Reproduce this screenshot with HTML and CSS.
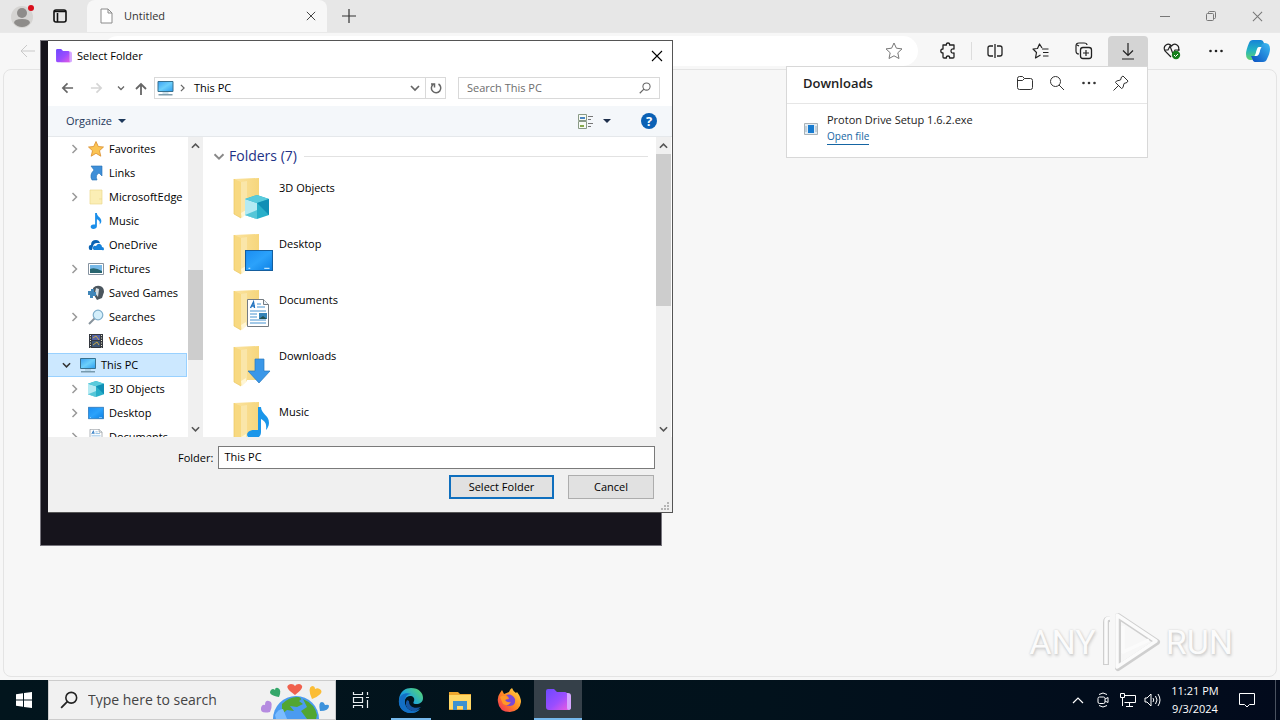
FILE: index.html
```html
<!DOCTYPE html>
<html lang="en">
<head>
<meta charset="utf-8">
<title>Select Folder</title>
<link rel="stylesheet" href="styles.css">
</head>
<body>
<svg class="defs" aria-hidden="true">
  <defs>
    <linearGradient id="g-folder" x1="0" x2="1"><stop offset="0" stop-color="#fbe3a0"/><stop offset="1" stop-color="#f6d67c"/></linearGradient>
    <linearGradient id="g-screen" x1="0" y1="0" x2="1" y2="1"><stop offset="0" stop-color="#3aa0f3"/><stop offset=".5" stop-color="#6cd0fb"/><stop offset="1" stop-color="#2c9cf0"/></linearGradient>
    <linearGradient id="g-desk" x1="0" y1="0" x2="1" y2="1"><stop offset="0" stop-color="#1a8df2"/><stop offset=".5" stop-color="#2ba2fb"/><stop offset="1" stop-color="#0c80e4"/></linearGradient>
    <linearGradient id="g-proton" x1="0" y1="0" x2="1" y2="1"><stop offset="0" stop-color="#6d49ff"/><stop offset=".55" stop-color="#9a4dff"/><stop offset="1" stop-color="#ec5be0"/></linearGradient>
    <linearGradient id="g-edge" x1="0" y1="1" x2="1" y2="0"><stop offset="0" stop-color="#0b62bd"/><stop offset=".5" stop-color="#1da5dd"/><stop offset="1" stop-color="#5fdc63"/></linearGradient>
    <linearGradient id="g-fox" x1="1" y1="0" x2="0" y2="1"><stop offset="0" stop-color="#ffe14a"/><stop offset=".5" stop-color="#ff8b22"/><stop offset="1" stop-color="#f0255e"/></linearGradient>
    <linearGradient id="g-cop1" x1="0" y1="0" x2="0" y2="1"><stop offset="0" stop-color="#1583d8"/><stop offset=".5" stop-color="#23b3c3"/><stop offset="1" stop-color="#64d36a"/></linearGradient>
    <linearGradient id="g-cop2" x1="1" y1="0" x2="0" y2="1"><stop offset="0" stop-color="#3bbcf3"/><stop offset="1" stop-color="#0a4ec0"/></linearGradient>
    <symbol id="i-chev" viewBox="0 0 8 10"><path d="M2 1l4 4-4 4" fill="none" stroke="currentColor" stroke-width="1.5"/></symbol>
    <symbol id="i-down" viewBox="0 0 10 8"><path d="M1 2l4 4 4-4" fill="none" stroke="currentColor" stroke-width="1.7"/></symbol>
    <symbol id="i-up" viewBox="0 0 10 8"><path d="M1 6l4-4 4 4" fill="none" stroke="currentColor" stroke-width="1.8"/></symbol>
    <symbol id="i-x" viewBox="0 0 12 12"><path d="M1 1l10 10M11 1L1 11" fill="none" stroke="currentColor" stroke-width="1.1"/></symbol>
    <symbol id="i-arrow" viewBox="0 0 14 12"><path d="M13 6H2M7 1L2 6l5 5" fill="none" stroke="currentColor" stroke-width="1.8"/></symbol>
    <symbol id="i-dots" viewBox="0 0 16 4"><g fill="currentColor"><circle cx="2.5" cy="2" r="1.3"/><circle cx="8" cy="2" r="1.3"/><circle cx="13.500" cy="2" r="1.300"/></g></symbol>
    <symbol id="i-mag" viewBox="0 0 16 16"><circle cx="6.500" cy="6.500" r="5" fill="none" stroke="currentColor"/><path d="M10 10l5 5" stroke="currentColor"/></symbol>
    <symbol id="i-magleft" viewBox="0 0 16 16"><circle cx="10" cy="6" r="4.800" fill="none" stroke="currentColor" stroke-width="1.400"/><path d="M6.500 9.500L1 15" stroke="currentColor" stroke-width="1.600"/></symbol>
    <symbol id="i-pc" viewBox="0 0 16 16"><path d="M.5 1.500h15v10H.5z" fill="url(#g-screen)" stroke="#39718f"/><path d="M5 13h6" stroke="#9ec3d4"/><path d="M1 14.800h14" stroke="#61869a" stroke-width="1.200"/></symbol>
    <symbol id="i-desk" viewBox="0 0 16 12"><path d="M.3.3h15.400v11.400H.3z" fill="url(#g-desk)" stroke="#155e9e" stroke-width=".6"/><path d="M2 10.500h1M11 10.500h3" stroke="#b9e3ff" stroke-width=".6"/></symbol>
    <symbol id="i-cube" viewBox="0 0 24 24"><path d="M0 4L12 0l12 4v16l-12 4L0 20z" fill="#28afc9"/><path d="M0 4l12 4v16L0 20z" fill="#b4eaf3"/><path d="M0 4L12 0l12 4-12 4z" fill="#59cbdc"/><path d="M12 8l12-4v16z" fill="#108fb5"/><path d="M0 20l12-5v9z" fill="#55c6d8"/></symbol>
    <symbol id="i-note" viewBox="0 0 12 18"><path d="M5 0h2c0 4 5 5 5 9 0 2-1 3-2 4 1-4-1-5-3-6v8c0 2-2 3-4 3-4 0-4-5 0-5h2z" fill="#1a8eea"/></symbol>
    <symbol id="i-doc" viewBox="0 0 22 28"><path d="M.5.5h16l5 5v22H.5z" fill="#fff" stroke="#747b82"/><path d="M16.500.5v5h5" fill="#eef3f7" stroke="#747b82"/><path d="M3.500 9l3-6 1 6M4 7h4" stroke="#2474bf" stroke-width="1.400" fill="none"/><path d="M10 5h4M10 8h8M3 12h16M3 15h7M3 18h7M3 21h16M3 24h16" stroke="#4693d1" stroke-width="1"/><path d="M12 14h8v6h-8z" fill="#3584b8"/><path d="M12 20l4-3 4 3z" fill="#22504e"/></symbol>
    <symbol id="i-folder" viewBox="0 0 28 42"><path d="M1 2l25-1v34H8L1 37z" fill="url(#g-folder)"/><path d="M1 2l7 3v36L1 37z" fill="#f8d981"/><path d="M8 5l6-1v32l-6 5z" fill="#fae6a9"/><path d="M8 36l5-3v4l-4 4z" fill="#fff6d5"/><path d="M1 2v35l7 4" fill="none" stroke="#ecc75f" stroke-width=".7"/></symbol>
    <symbol id="i-proton" viewBox="0 0 25 22"><path d="M8 4h14q3 0 3 3v12q0 2-3 2H8z" fill="#d5a5ff"/><path d="M0 2q0-2 2-2h6l3 3h8q2 0 2 2v14q0 2 2 2H3q-3 0-3-3z" fill="url(#g-proton)"/></symbol>
  </defs>
</svg>

<div class="desktop">
  <main class="browser">
    <header class="tabs">
      <button class="bare profile" aria-label="Profile"><svg width="24" height="24" viewBox="0 0 24 24"><circle cx="11" cy="13" r="11" fill="#d5d4d2"/><circle cx="11" cy="9" r="5" fill="#8e8c8a"/><path d="M3 19q0-4 8-4t8 4q-3 4-8 4t-8-4z" fill="#8e8c8a"/><circle cx="20" cy="4" r="3" fill="#d90f1c"/></svg></button>
      <button class="bare tabmenu" aria-label="Tab actions"><svg width="14" height="14" viewBox="0 0 14 14"><rect x="1" y="1" width="12" height="12" rx="2" fill="none" stroke="#111" stroke-width="1.600"/><path d="M1 2.500h12M4.500 4v9" stroke="#111" stroke-width="1.600"/></svg></button>
      <div class="tab">
        <svg width="13" height="16" viewBox="0 0 13 16"><path d="M1 1h7l4 4v10H1zM8 1v4h4" fill="#fff" stroke="#8b8b8b"/></svg>
        <span class="tab-name">Untitled</span>
        <button class="bare" aria-label="Close tab"><svg class="s9"><use href="#i-x"/></svg></button>
      </div>
      <button class="bare newtab" aria-label="New tab"><svg width="14" height="14" viewBox="0 0 14 14"><path d="M7 0v14M0 7h14" stroke="#333" stroke-width="1.200"/></svg></button>
      <div class="wincontrols">
        <button class="bare" aria-label="Minimize"><svg width="10" height="10"><path d="M0 5.500h10" stroke="#777"/></svg></button>
        <button class="bare" aria-label="Restore"><svg width="10" height="10" viewBox="0 0 10 10" fill="none" stroke="#777"><rect x=".5" y="2.500" width="7" height="7" rx="1"/><path d="M2.500 2V1.500q0-1 1-1h5q1 0 1 1v5q0 1-1 1H8"/></svg></button>
        <button class="bare" aria-label="Close"><svg class="s11"><use href="#i-x"/></svg></button>
      </div>
    </header>
    <div class="toolbar">
      <button class="bare back" aria-label="Back"><svg width="16" height="14" viewBox="0 0 16 14"><path d="M15 7H1M7 1L1 7l6 6" fill="none" stroke="#c9c9c9"/></svg></button>
      <div class="omnibox"><button class="bare" aria-label="Favorite"><svg width="18" height="18" viewBox="0 0 18 18"><path d="M9 1l2.400 5.200 5.600.7-4.200 3.900 1.200 5.700L9 13.800l-5 2.700 1.200-5.700L1 6.900l5.600-.7z" fill="none" stroke="#777" stroke-linejoin="round"/></svg></button></div>
      <div class="tools">
        <button class="bare" aria-label="Extensions"><svg width="16" height="18" viewBox="0 0 16 18"><path d="M3 3h3.500q-.5-2 1.500-2t1.500 2H14v4q-3-.5-3 2t3 2v4q0 1-1 1H9.500q.5-2-1.500-2t-1.500 2H4q-1 0-1-1v-4Q.8 11 .8 9T3 7z" fill="none" stroke="#222" stroke-width="1.300" stroke-linejoin="round"/></svg></button>
        <button class="bare split" aria-label="Split screen"><svg width="16" height="14" viewBox="0 0 16 14"><path d="M6 2H3Q1 2 1 4v6q0 2 2 2h3M10 2h3q2 0 2 2v6q0 2-2 2h-3M8 0v14" fill="none" stroke="#222" stroke-width="1.300"/></svg></button>
        <button class="bare" aria-label="Favorites"><svg width="17" height="16" viewBox="0 0 17 16"><path d="M10 5L7.500 1 5.500 5.500 1 6l3.500 3.500L3.500 15l5-3M10 6h6.500M11 9.500h5.500M11 13h5.500" fill="none" stroke="#222" stroke-width="1.200" stroke-linejoin="round"/></svg></button>
        <button class="bare" aria-label="Collections"><svg width="18" height="18" viewBox="0 0 18 18"><path d="M4 12Q1 12 1 9V4q0-3 3-3h5q3 0 3 2M4 4L2 3" fill="none" stroke="#222" stroke-width="1.200"/><rect x="5.500" y="5.500" width="11" height="11" rx="2.500" fill="#f7f7f7" stroke="#222" stroke-width="1.300"/><path d="M11 8v6M8 11h6" stroke="#222" stroke-width="1.200"/></svg></button>
        <button class="bare active" aria-label="Downloads"><svg width="14" height="17" viewBox="0 0 14 17"><path d="M7 0v12M2 7.500l5 5 5-5M1 16h12" fill="none" stroke="#222" stroke-width="1.200"/></svg></button>
        <button class="bare" aria-label="Browser essentials"><svg width="18" height="18" viewBox="0 0 18 18"><path d="M8 15L2 9q-2-4 1-6 3-2 5.500 1Q11 1 14 3q3 2 1 6M1 8h4l2-4 3 8 2-4h5" fill="none" stroke="#222" stroke-width="1.200"/><circle cx="13" cy="13" r="4.200" fill="#16801d"/><path d="M11 13l1.500 1.500L15 12" fill="none" stroke="#fff"/></svg></button>
        <button class="bare" aria-label="Settings and more"><svg width="16" height="4"><use href="#i-dots"/></svg></button>
        <button class="bare" aria-label="Copilot"><svg width="24" height="24" viewBox="0 0 24 24"><path d="M7 1h8q2 0 3 3l1 4h-5q-2 0-3 3l-2 7q-1 3-4 3-5 0-5-6 0-4 3-11 1-3 4-3z" fill="url(#g-cop1)"/><path d="M17 23H9q-2 0-3-4l-1-2h5q2 0 3-3l2-7q1-3 4-3 5 0 5 6 0 4-3 10-1 3-4 3z" fill="url(#g-cop2)"/><path d="M13 8h3q-1 0-1.500 2L13 15q-1 2-3 2H8q1 0 1.500-2L11 10q.5-2 2-2z" fill="#fff"/></svg></button>
      </div>
    </div>
    <section class="page" aria-label="Page"></section>

    <section class="downloads">
      <div class="dl-head">
        <h2>Downloads</h2>
        <button class="bare" aria-label="Open downloads folder"><svg width="16" height="14" viewBox="0 0 16 14" fill="none" stroke="#333"><path d="M.5 11.500v-9q0-2 2-2h3l2 2h6q2 0 2 2v7q0 2-2 2h-11q-2 0-2-2zM.5 4.500h5l2-2"/></svg></button>
        <button class="bare" aria-label="Search downloads"><svg width="16" height="16"><use href="#i-mag"/></svg></button>
        <button class="bare" aria-label="More options"><svg width="16" height="4"><use href="#i-dots"/></svg></button>
        <button class="bare" aria-label="Pin"><svg width="16" height="16" viewBox="0 0 16 16" fill="none" stroke="#333" stroke-linejoin="round"><path d="M10 1l5 5-1 1.500-3 1-1 4-1.500 1-6-6 1-1.500 4-1 1-3zM5 11l-4.500 4.500"/></svg></button>
      </div>
      <div class="dl-item">
        <svg width="14" height="12" viewBox="0 0 14 12"><path d="M.5.5h13v11H.5z" fill="#e4edf3" stroke="#a9b2b8"/><path d="M4 2h6v8H4z" fill="#187bd0"/><path d="M2 3v6M12 3v6" stroke="#9fb4c3"/></svg>
        <div><div class="dl-name">Proton Drive Setup 1.6.2.exe</div><a href="#">Open file</a></div>
      </div>
    </section>

    <div class="watermark"><span>ANY</span>
      <svg width="60" height="64" viewBox="0 0 60 64" fill="none" stroke-linejoin="round"><g stroke="#cfcfcf" stroke-width="6"><path d="M17 6l39 26-39 26z"/><path d="M5 55V12q0-3 4-3"/></g><g stroke="#fbfbfb" stroke-width="3.500"><path d="M16 5l39 26-39 26z"/><path d="M5 54V11q0-3 4-3M22 16v26l26-12"/></g></svg>
      <span>RUN</span></div>
  </main>

  <div class="backwindow"></div>
  <section class="dialog" role="dialog" aria-labelledby="dlg-title">
    <header class="titlebar">
      <svg width="16" height="14"><use href="#i-proton"/></svg>
      <h1 id="dlg-title">Select Folder</h1>
      <button class="bare" aria-label="Close dialog"><svg class="s12"><use href="#i-x"/></svg></button>
    </header>
    <div class="navrow">
      <div class="navbtns">
        <button class="bare" aria-label="Back"><svg width="13" height="12"><use href="#i-arrow"/></svg></button>
        <button class="bare off" aria-label="Forward"><svg class="flip" width="13" height="12"><use href="#i-arrow"/></svg></button>
        <button class="bare small" aria-label="Recent"><svg width="8" height="6"><use href="#i-down"/></svg></button>
        <button class="bare" aria-label="Up"><svg width="12" height="13" viewBox="0 0 12 13"><path d="M6 13V2M1 7l5-5 5 5" fill="none" stroke="#666" stroke-width="1.800"/></svg></button>
      </div>
      <div class="address">
        <svg width="17" height="16"><use href="#i-pc"/></svg>
        <svg class="crumb" width="7" height="8"><use href="#i-chev"/></svg>
        <span>This PC</span>
        <button class="bare" aria-label="Previous locations"><svg width="10" height="8"><use href="#i-down"/></svg></button>
        <button class="bare refresh" aria-label="Refresh"><svg width="12" height="12" viewBox="0 0 12 12"><path d="M8.500 2a4.700 4.700 0 1 1-5.300.3M1 2h3.500v3.500" fill="none" stroke="#666" stroke-width="1.500"/></svg></button>
      </div>
      <label class="find"><input type="text" placeholder="Search This PC" aria-label="Search This PC"><svg width="12" height="12"><use href="#i-magleft"/></svg></label>
    </div>
    <div class="commands">
      <button class="bare organize">Organize <svg width="8" height="4"><path d="M0 0h8L4 4z" fill="#1e395b"/></svg></button>
      <button class="bare view" aria-label="Change view"><svg width="16" height="15" viewBox="0 0 16 15"><path d="M.5.5h8v6h-8zM.5 7.500h8v7h-8z" fill="#f7fbf5" stroke="#8a9a86"/><path d="M2 3h5v2H2z" fill="#4b86c2"/><path d="M2 11h4v2H2z" fill="#87a94c"/><path d="M10 2.500h5M10 5.500h3M10 9.500h5M10 12.500h3" stroke="#777"/></svg><svg width="8" height="4"><path d="M0 0h8L4 4z" fill="#1e2f4b"/></svg></button>
      <button class="help" aria-label="Help">?</button>
    </div>
    <div class="panes">
      <nav class="tree">
        <ul>
          <li><svg class="exp"><use href="#i-chev"/></svg><svg class="ic" viewBox="0 0 16 16"><path d="M8 .5l2.300 5 5.200.5-4 3.700 1.300 5.500L8 12.300l-4.800 2.900 1.300-5.500L.5 6l5.200-.5z" fill="#fbc453" stroke="#d98d2c" stroke-width=".8"/></svg>Favorites</li>
          <li><i class="exp"></i><svg class="ic" viewBox="0 0 16 16"><path d="M3 1h11v10l-3-3q-4 2-2 7H4q-3-5 2-10z" fill="#3f8fd8" stroke="#2470b5" stroke-width=".6"/></svg>Links</li>
          <li><svg class="exp"><use href="#i-chev"/></svg><svg class="ic" viewBox="0 0 16 16"><path d="M2 1h12v14H2z" fill="#fbeeb5"/><path d="M2 1h12v14H2zM11 10h3" fill="none" stroke="#ecd88c" stroke-width=".7"/></svg>MicrosoftEdge</li>
          <li><i class="exp"></i><svg class="ic"><use href="#i-note"/></svg>Music</li>
          <li><i class="exp"></i><svg class="ic" viewBox="0 0 16 16"><path d="M1 12Q0 8 3 8q0-5 5-5 3 0 4 3H9Q6 6 5 9l-1 4H3q-2 0-2-1z" fill="#0a63b4"/><path d="M6 13q-2-1-1-3t3-1q2-3 4-2t2 3q2 0 2 2t-2 1z" fill="#1681d9"/></svg>OneDrive</li>
          <li><svg class="exp"><use href="#i-chev"/></svg><svg class="ic" viewBox="0 0 16 16"><path d="M.5 2.500h15v11H.5z" fill="#fff" stroke="#8693a0"/><path d="M2 4h12v8H2z" fill="#77b9e8"/><path d="M2 8q5-2 12 2v2H2z" fill="#28656f"/></svg>Pictures</li>
          <li><i class="exp"></i><svg class="ic" viewBox="0 0 16 16"><path d="M5 3q3-3 7-2 4 1 4 6l-2 6-5 2-3-5z" fill="#4b565e"/><path d="M8 3l3 1-1 8-3-4z" fill="#d7e0e5"/><path d="M0 6h3V4h3v3h2v4H5v2H2v-3H0z" fill="#4086b8"/></svg>Saved Games</li>
          <li><svg class="exp"><use href="#i-chev"/></svg><svg class="ic" viewBox="0 0 16 16"><path d="M7 9l-6 6" stroke="#87939c" stroke-width="2"/><circle cx="10" cy="6" r="4.800" fill="#d4effb" stroke="#7faecb" stroke-width="1.200"/></svg>Searches</li>
          <li><i class="exp"></i><svg class="ic" viewBox="0 0 16 16"><path d="M1 1h14v14H1z" fill="#34383f"/><path d="M4 2h8v5H4z" fill="#5262a6"/><path d="M4 8h8v6H4z" fill="#3e5675"/><path d="M5 5l3-2 3 4M5 12l4-3 2 3" stroke="#c9a947" fill="none"/><path d="M2.500 2v13M13.500 2v13" stroke="#e8ead5" stroke-dasharray="1 1.500"/></svg>Videos</li>
          <li class="root selected"><svg class="exp open"><use href="#i-down"/></svg><svg class="ic"><use href="#i-pc"/></svg>This PC</li>
          <li><svg class="exp"><use href="#i-chev"/></svg><svg class="ic"><use href="#i-cube"/></svg>3D Objects</li>
          <li><svg class="exp"><use href="#i-chev"/></svg><svg class="ic"><use href="#i-desk"/></svg>Desktop</li>
          <li><svg class="exp"><use href="#i-chev"/></svg><svg class="ic"><use href="#i-doc"/></svg>Documents</li>
        </ul>
      </nav>
      <div class="scroll tree-scroll"><svg class="sa"><use href="#i-up"/></svg><div class="track"><div class="thumb"></div></div><svg class="sa"><use href="#i-down"/></svg></div>
      <div class="files">
        <h2><svg width="12" height="9"><use href="#i-down"/></svg>Folders (7)</h2>
        <ul>
          <li><svg width="44" height="44"><use href="#i-folder" width="28" height="42"/><use href="#i-cube" x="12" y="18" width="24" height="24"/></svg>3D Objects</li>
          <li><svg width="44" height="44"><use href="#i-folder" width="28" height="42"/><use href="#i-desk" x="12" y="17" width="28" height="21"/></svg>Desktop</li>
          <li><svg width="44" height="44"><use href="#i-folder" width="28" height="42"/><use href="#i-doc" x="14" y="10" width="22" height="28"/></svg>Documents</li>
          <li><svg width="44" height="44"><use href="#i-folder" width="28" height="42"/><path d="M22 14h9v12h6L26 38 15 26h7z" fill="#3a97e8" stroke="#2878bd" stroke-width=".7"/></svg>Downloads</li>
          <li><svg width="44" height="44"><use href="#i-folder" width="28" height="42"/><path d="M25 6h3c0 7 8 8 8 16 0 3-2 6-3 7 1-8-2-9-5-11v13c0 5-4 7-8 7-8 0-8-9 1-9h4z" fill="#1a96ea"/></svg>Music</li>
        </ul>
      </div>
      <div class="scroll file-scroll"><svg class="sa"><use href="#i-up"/></svg><div class="track"><div class="thumb"></div></div><svg class="sa"><use href="#i-down"/></svg></div>
    </div>
    <footer class="dlg-foot">
      <div class="field"><label for="folder">Folder:</label><input id="folder" type="text" value="This PC"></div>
      <div class="actions"><button class="btn primary">Select Folder</button><button class="btn">Cancel</button></div>
      <svg class="grip" width="9" height="9" fill="#b5b5b5"><path d="M6 0h2v2H6zM3 3h2v2H3zM6 3h2v2H6zM0 6h2v2H0zM3 6h2v2H3zM6 6h2v2H6z"/></svg>
    </footer>
  </section>
</div>

<footer class="taskbar">
  <button class="bare start" aria-label="Start"><svg width="16" height="16" viewBox="0 0 16 16" fill="#fff"><path d="M0 2.200L7 1.200V7.500H0zM8 1l8-1v7.500H8zM0 8.500h7v6.300l-7-1zM8 8.500h8V16l-8-1z"/></svg></button>
  <label class="tasksearch"><svg width="18" height="18"><use href="#i-magleft"/></svg><input type="text" placeholder="Type here to search" aria-label="Type here to search">
    <svg width="72" height="38" viewBox="0 0 72 38"><circle cx="37" cy="38" r="23" fill="#4b9bf0"/><path d="M23 23q8-8 17-7 4 2 0 4l4 3-6 3-7-1 4 5-7-1-5 4zM44 18q12 5 14 16l-1 4h-9l-6-8 6-4z" fill="#52a632"/><path d="M16 34q3-6 8-6l4 10H17z" fill="#7bbcff"/><path d="M36 14q-13-9-4-11 3 0 4 2 1-2 4-2 8 2-4 11z" fill="#f0604d"/><path d="M20 16q-12-2-8-7 2-2 4 0 0-3 3-2 4 2 1 9z" fill="#35a76a"/><path d="M53 18q-5-11 0-13 3 0 3 3 3-2 6 1 3 4-9 9z" fill="#fbbd35"/><path d="M11 31q-10 2-9-4 1-4 4-3 0-5 4-4 5 1 1 11z" fill="#b58be0"/><path d="M61 30q-2-9 2-9 2 0 3 3 4-1 4 1 0 5-9 5z" fill="#3c92dc"/></svg></label>
  <div class="apps">
    <button class="bare" aria-label="Task view"><svg width="18" height="16" viewBox="0 0 18 16" fill="none" stroke="#e8edef"><path d="M1.500 0v2.500h9V0M1.500 16v-2.500h9V16M1.500 5.500h9v5h-9zM15.500 0v3M15.500 8v8M14 5.500h3" stroke-width="1.200"/></svg></button>
    <button class="bare running" aria-label="Microsoft Edge"><svg width="26" height="26" viewBox="0 0 26 26"><path d="M1 12C2 4 8 1 13 1c8 0 12 5 12 10 0 4-3 6-7 6-3 0-3-1-2-3 1-3-1-5-4-5-4 0-6 4-5 8 1 5 6 8 11 7l4-2c-3 3-6 4-9 4C4 26 0 19 1 12z" fill="url(#g-edge)"/><path d="M1 13c1-6 7-8 12-6-5 0-7 5-6 10 1 5 7 8 11 7l4-2c-3 3-6 4-9 4C5 26 0 20 1 13z" fill="#136fc5"/><path d="M9 13c-4 7 3 12 9 11l5-4c-7 2-12 0-12-6z" fill="#1656a4"/></svg></button>
    <button class="bare" aria-label="File Explorer"><svg width="22" height="19" viewBox="0 0 22 19"><path d="M0 1h9l2 2h11v16H0z" fill="#eea72e"/><path d="M0 4h22v14H0z" fill="#ffd867"/><path d="M4 10h14v9h-4v-4H8v4H4z" fill="#3d91cf"/></svg></button>
    <button class="bare" aria-label="Firefox"><svg width="24" height="24" viewBox="0 0 24 24"><path d="M3 5l2-3 2 4 5-2q1-3 3-4 1 3 4 5l1-1q4 5 4 10-1 9-11 10Q2 24 1 14 0 9 3 5z" fill="url(#g-fox)"/><path d="M9 7q6-2 9 4 1 7-5 7-6 0-6-6l5-1q0-2-3-4z" fill="#7948d8"/><path d="M3 9q4-3 8 1l-3 2q2 3 6 2-3 5-8 2z" fill="#ff9828"/></svg></button>
    <button class="bare current" aria-label="Proton Drive"><svg width="25" height="22"><use href="#i-proton"/></svg></button>
  </div>
  <div class="tray">
    <svg class="caret" width="12" height="7" viewBox="0 0 12 7"><path d="M1 6l5-5 5 5" fill="none" stroke="#fff" stroke-width="1.200"/></svg>
    <svg class="meet" width="12" height="16" viewBox="0 0 12 16" fill="none" stroke="#fff"><rect x="1" y="5" width="7" height="6.500" rx="1.500"/><path d="M8 7l3-1.500v5L8 9M2 2.500q4-3 8 0M2 13.500q4 3 8 0"/></svg>
    <svg width="16" height="14" viewBox="0 0 16 14" fill="none" stroke="#fff"><path d="M5 2.500h10.500v7H4.500M.5.5h4v4h-4zM2.500 4.500V13M9.500 10v3M6 13.500h7"/></svg>
    <svg width="17" height="14" viewBox="0 0 17 14" fill="none" stroke="#fff"><path d="M1 5h2l4-4v12L3 9H1zM9 5q1.500 2 0 4M11.500 3q3 4 0 8M14 1q4 6 0 12"/></svg>
    <div class="clock"><time>11:21 PM</time><time>9/3/2024</time></div>
    <svg width="16" height="16" viewBox="0 0 16 16" fill="none" stroke="#fff"><path d="M.5 1.500h15v11h-5L8 15l-2.500-2.500h-5z"/></svg>
    <button class="bare showdesk" aria-label="Show desktop"></button>
  </div>
</footer>
</body>
</html>
```
FILE: styles.css
```css
* { box-sizing: border-box; }
body { margin: 0; min-height: 100vh; display: flex; flex-direction: column; font: 11px/16px "Open Sans", "Noto Sans", sans-serif; color: #000; background: #e7e7e7; }
h1, h2, ul { margin: 0; padding: 0; list-style: none; font-weight: 400; }
input, button { font: inherit; color: inherit; }
svg { flex: none; display: block; }
.defs { position: absolute; width: 0; height: 0; }
.bare { border: 0; padding: 0; background: none; display: flex; align-items: center; justify-content: center; }
.s9 { width: 10px; height: 10px; }
.s11 { width: 11px; height: 11px; }
.s12 { width: 12px; height: 12px; }
.flip { transform: scaleX(-1); }

/* Browser window */
.desktop { position: relative; flex: 1; display: flex; }
.browser { position: relative; flex: 1; display: flex; flex-direction: column; background: #f7f7f7; padding-bottom: 3px; }
.tabs { height: 32px; display: flex; align-items: center; background: #e7e7e7; }
.profile { width: 24px; margin-left: 11px; }
.tabmenu { width: 14px; margin: 0 20px 0 18px; }
.tab { width: 240px; height: 32px; padding: 0 11px 0 13px; display: flex; align-items: center; gap: 11px; background: #f7f7f7; border-radius: 8px 8px 0 0; color: #333; }
.tab-name { flex: 1; }
.newtab { width: 14px; margin-left: 15px; color: #333; }
.wincontrols { margin-left: auto; display: flex; color: #777; }
.wincontrols .bare { width: 46px; height: 32px; }
.toolbar { height: 37px; display: flex; align-items: center; border-top: 1px solid #e9e9e9; }
.back { width: 16px; margin: 0 67px 0 20px; }
.omnibox { flex: 1; height: 30px; display: flex; align-items: center; justify-content: flex-end; padding-right: 15px; background: #fff; border-radius: 15px; }
.tools { display: flex; align-items: center; margin-left: 6px; padding-right: 2px; }
.tools .bare { width: 44px; height: 30px; color: #222; }
.tools .bare:first-child { border-right: 1px solid #ddd; width: 48px; height: 18px; }
.tools .split { width: 46px; }
.tools .active { width: 40px; background: #d4d4d4; border-radius: 4px 4px 0 0; margin: 0 2px; }
.tools .bare:last-child { width: 40px; }
.page { flex: 1; margin: 0 3px; border: 1px solid #e4e4e4; border-radius: 8px; background: #f7f7f7; }

.downloads { position: absolute; top: 66px; right: 132px; width: 362px; border: 1px solid #d8d8d8; background: #fff; }
.dl-head { height: 37px; padding: 0 10px 4px 16px; display: flex; align-items: center; border-bottom: 1px solid #e6e6e6; color: #333; }
.dl-head h2 { flex: 1; font-size: 13px; font-weight: 600; color: #222; }
.dl-head .bare { width: 32px; height: 24px; }
.dl-item { display: flex; align-items: center; gap: 9px; padding: 8px 17px 12px; color: #222; }
.dl-item a { display: inline-block; font-size: 10px; line-height: 16px; color: #1565a3; text-decoration: none; border-bottom: 1px solid #1565a3; }

.watermark { position: absolute; right: 47px; bottom: 6px; display: flex; align-items: center; gap: 5px; font: 34px/1 "Liberation Sans Narrow", Roboto, sans-serif; color: #fbfbfb; text-shadow: 0 0 2px #ccc, 1px 2px 3px #ccc; }

/* Folder dialog and the window behind it */
.backwindow { position: absolute; left: 40px; top: 40px; width: 622px; height: 506px; background: #16141c; border: 1px solid #77757d; }
.dialog { position: absolute; left: 48px; top: 40px; width: 625px; background: #fff; border: 1px solid #555; border-left: 0; }
.titlebar { height: 30px; display: flex; align-items: center; gap: 5px; padding: 0 9px 0 8px; }
.titlebar h1 { flex: 1; font-size: 11px; }
.navrow { display: flex; align-items: center; padding: 5px 12px 6px; height: 35px; color: #666; }
.navbtns { display: flex; align-items: center; width: 94px; }
.navbtns .bare { width: 14px; height: 22px; }
.navbtns .off { color: #d5d5d5; margin: 0 13px 0 15px; }
.navbtns .small { width: 9px; margin-right: 9px; }
.address { width: 292px; height: 22px; border: 1px solid #d9d9d9; display: flex; align-items: center; padding-left: 2px; color: #000; }
.address .crumb { margin: 0 8px 0 5px; color: #666; }
.address span { flex: 1; }
.address .bare { width: 20px; height: 20px; color: #666; }
.address .refresh { border-left: 1px solid #d9d9d9; }
.find { flex: 1; height: 22px; margin-left: 12px; border: 1px solid #d9d9d9; display: flex; align-items: center; padding: 0 8px; }
.find input, .tasksearch input { flex: 1; min-width: 0; border: 0; padding: 0; background: none; outline: 0; }
.find input::placeholder { color: #6d6d6d; opacity: 1; }
.commands { height: 31px; display: flex; align-items: center; background: #f4f7fa; border-bottom: 1px solid #e5e8eb; padding: 0 15px 0 18px; }
.organize { gap: 6px; color: #1e395b; margin-right: auto; }
.view { gap: 9px; margin-right: 30px; }
.help { width: 16px; height: 16px; border: 0; border-radius: 50%; padding: 0; background: #0b61b5; color: #fff; font-size: 13px; font-weight: 700; line-height: 16px; }
.panes { height: 300px; display: flex; overflow: hidden; }
.tree { width: 139px; overflow: hidden; }
.tree li { height: 24px; display: flex; align-items: center; padding-left: 22px; border: 1px solid transparent; border-left: 0; white-space: nowrap; }
.tree .root { padding-left: 14px; }
.tree .selected { background: #cce8ff; border-color: #99d1ff; }
.exp { width: 9px; height: 10px; margin-right: 9px; color: #999; }
.exp.open { color: #333; }
.ic { width: 16px; height: 16px; margin-right: 5px; }
.scroll { width: 15px; display: flex; flex-direction: column; align-items: center; background: #f0f0f0; color: #555; }
.tree-scroll { margin: 0 1px; }
.file-scroll { margin-right: 1px; }
.sa { width: 9px; height: 8px; margin: 5px 0 4px; }
.track { flex: 1; width: 100%; }
.thumb { background: #cdcdcd; }
.tree-scroll .thumb { height: 90px; margin-top: 116px; }
.file-scroll .thumb { height: 152px; }
.files { flex: 1; padding: 10px 8px 0 9px; overflow: hidden; }
.files h2 { display: flex; align-items: center; gap: 4px; font-size: 14px; line-height: 18px; color: #1e3287; margin-bottom: 12px; }
.files h2 svg { color: #888; }
.files h2::after { content: ""; flex: 1; height: 1px; margin-left: 3px; background: #e2e2e2; }
.files li { display: flex; gap: 2px; height: 56px; padding-left: 20px; line-height: 22px; }
.dlg-foot { position: relative; background: #f0f0f0; padding: 9px 17px 13px; }
.field { display: flex; align-items: center; gap: 5px; padding-left: 113px; }
.field input { flex: 1; min-width: 0; height: 23px; padding: 0 5px 2px; border: 1px solid #7a7a7a; background: #fff; }
.actions { display: flex; justify-content: flex-end; gap: 14px; margin: 6px 1px 0 0; }
.btn { width: 86px; height: 24px; padding: 0; border: 1px solid #adadad; background: #e1e1e1; }
.btn.primary { width: 105px; border: 2px solid #0f6fbe; }
.grip { position: absolute; right: 2px; bottom: 1px; }

/* Taskbar */
.taskbar { height: 40px; display: flex; align-items: center; background: linear-gradient(90deg, #02151d, #02121c 60%, #020a1c); color: #fff; }
.start { width: 48px; height: 40px; }
.tasksearch { width: 288px; height: 40px; display: flex; align-items: center; gap: 10px; padding: 0 4px 0 11px; background: #f1f1f1; border: 1px solid #ccc; color: #222; font-size: 14px; overflow: hidden; }
.tasksearch input::placeholder { color: #444; opacity: 1; }
.apps { display: flex; }
.apps .bare { width: 48px; height: 40px; margin-right: 1px; }
.apps .bare:first-child { width: 50px; }
.apps .running { background: linear-gradient(#76b9ed, #76b9ed) center bottom / 40px 2px no-repeat; }
.apps .current { background: linear-gradient(#76b9ed, #76b9ed) center bottom / 100% 2px no-repeat #354049; }
.tray { margin-left: auto; display: flex; align-items: center; gap: 8px; }
.tray .caret { margin-right: 5px; }
.tray .meet { margin-right: 3px; }
.clock { display: flex; flex-direction: column; align-items: center; line-height: 18px; width: 52px; margin-right: 10px; }
.tray .showdesk { width: 5px; height: 40px; margin-left: 12px; border-left: 1px solid #4a5260; }
```
